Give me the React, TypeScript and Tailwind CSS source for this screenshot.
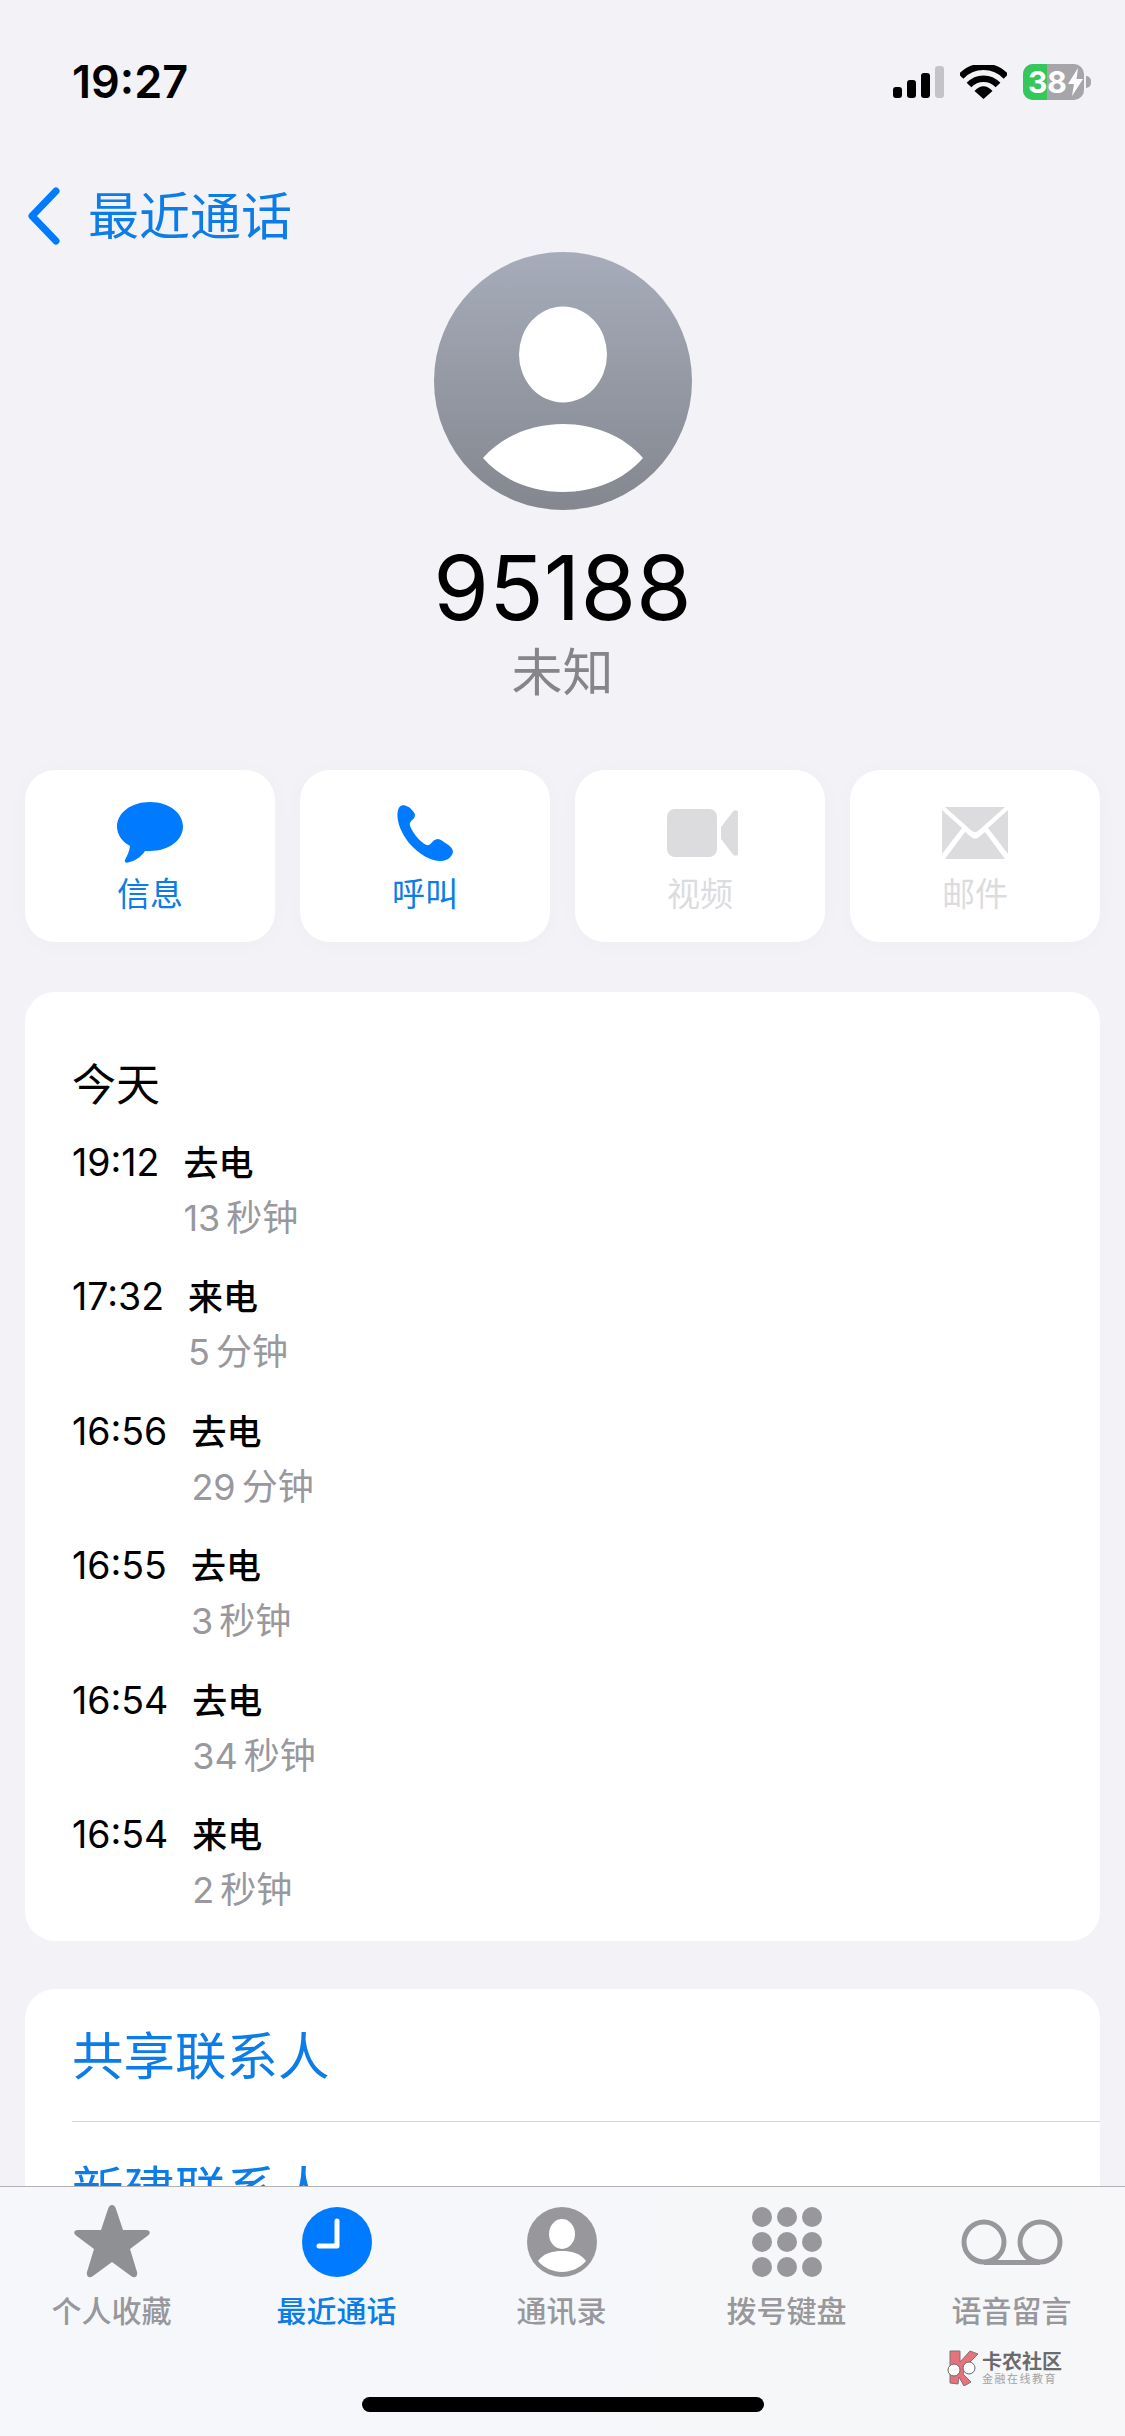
import React from 'react';

const FONT = "font-['Inter','Noto_Sans_CJK_SC',sans-serif]";

const calls = [
  { time: '19:12', kind: '去电', length: '13', unit: '秒钟' },
  { time: '17:32', kind: '来电', length: '5', unit: '分钟' },
  { time: '16:56', kind: '去电', length: '29', unit: '分钟' },
  { time: '16:55', kind: '去电', length: '3', unit: '秒钟' },
  { time: '16:54', kind: '去电', length: '34', unit: '秒钟' },
  { time: '16:54', kind: '来电', length: '2', unit: '秒钟' },
];

function StatusIcons() {
  return (
    <div className="flex items-center">
      <svg width="52" height="34" viewBox="0 0 52 34">
        <rect x="0" y="22" width="9" height="11" rx="3" fill="#000" />
        <rect x="14" y="15" width="9" height="18" rx="3" fill="#000" />
        <rect x="28" y="8" width="9" height="25" rx="3" fill="#000" />
        <rect x="42" y="1" width="9" height="32" rx="3" fill="#c3c3c8" />
      </svg>
      <svg className="ml-[15px]" width="47" height="34" viewBox="0 0 47 34">
        <path d="M1 11.5C13 -1.5 34 -1.5 46 11.5" fill="none" stroke="#000" strokeWidth="6.5" />
        <path d="M9 20C17 11.5 30 11.5 38 20" fill="none" stroke="#000" strokeWidth="6.5" />
        <path d="M14.5 26C20 19.5 27 19.5 32.5 26L23.5 34Z" fill="#000" />
      </svg>
      <div className="ml-[16px] flex items-center">
        <div className="relative h-[36px] w-[61px] overflow-hidden rounded-[10px] bg-[#a6a6aa]">
          <div className="absolute inset-y-0 left-0 w-[24px] bg-[#34c759]" />
          <div className="absolute inset-0 flex items-center pl-[5px] text-[30px] leading-none font-bold text-white">
            38
            <svg className="ml-[1px]" width="15" height="28" viewBox="0 0 15 28">
              <path d="M10 0 0 16h6l-2 12L15 11H8.500Z" fill="#fff" />
            </svg>
          </div>
        </div>
        <div className="ml-[2px] h-[12px] w-[5px] rounded-r-full bg-[#a6a6aa]" />
      </div>
    </div>
  );
}

function Avatar() {
  return (
    <div className="relative h-[258px] w-[258px] overflow-hidden rounded-full bg-gradient-to-b from-[#a6acba] to-[#84878f]">
      <svg width="258" height="258" viewBox="0 0 258 258">
        <ellipse cx="129" cy="102.500" rx="44" ry="48" fill="#fff" />
        <path d="M49 206C68 184 98 172 129 172C160 172 190 184 209 206C190 228 160 240 129 240C98 240 68 228 49 206Z" fill="#fff" />
      </svg>
    </div>
  );
}

function ActionButton({ label, disabled, children }: { label: string; disabled?: boolean; children: React.ReactNode }) {
  return (
    <div className="flex h-[172px] w-[250px] flex-col items-center rounded-[30px] bg-white shadow-[0_2px_24px_rgba(0,0,0,0.025)]">
      <div className="flex h-[102px] items-center justify-center pt-[24px]">{children}</div>
      <span className={`text-[33px] leading-[44px] ${disabled ? 'text-[#dcdcdf]' : 'text-[#0b7ce8]'}`}>{label}</span>
    </div>
  );
}

function TabItem({ label, active, children }: { label: string; active?: boolean; children: React.ReactNode }) {
  return (
    <div className="flex w-[225px] flex-col items-center">
      <div className="flex h-[76px] items-center justify-center">{children}</div>
      <span className={`mt-[11px] text-[30px] leading-[40px] font-medium ${active ? 'text-[#0b7ce8]' : 'text-[#98989c]'}`}>{label}</span>
    </div>
  );
}

export default function App() {
  return (
    <div className={`relative h-[2436px] w-[1125px] overflow-hidden bg-[#f2f2f7] text-black ${FONT}`}>
      {/* status bar */}
      <div className="flex h-[184px] items-start justify-between pt-[58px] pr-[34px] pl-[72px]">
        <span className="text-[45px] leading-[48px] font-semibold">19:27</span>
        <div className="pt-[6px]">
          <StatusIcons />
        </div>
      </div>

      {/* nav */}
      <div className="flex h-[64px] items-center pl-[27px]">
        <svg width="34" height="58" viewBox="0 0 34 58">
          <path d="M29 4 5 29l24 25" fill="none" stroke="#007aff" strokeWidth="7" strokeLinecap="round" strokeLinejoin="round" />
        </svg>
        <span className="mt-[2px] ml-[27px] text-[51px] leading-[64px] text-[#0b7ce8]">最近通话</span>
      </div>

      <div className="mt-[4px] flex flex-col items-center">
        <Avatar />
        <div className="mt-[28px] text-[90px] leading-[100px]">95188</div>
        <div className="mt-[5px] mb-[-1px] text-[51px] leading-[60px] text-[#85858a]">未知</div>
      </div>

      {/* actions */}
      <div className="mt-[68px] flex justify-between px-[25px]">
        <ActionButton label="信息">
          <svg width="68" height="62" viewBox="0 0 68 62">
            <path d="M34 0C15 0 1 11 1 24.500C1 33 6.500 40 14 44C13.500 49 11 54 9 58C8 60 10 61 12 60.500C19 59 25 55 29 49C31 49 32.500 49 34 49C53 49 67 38 67 24.500C67 11 53 0 34 0Z" fill="#007aff" />
          </svg>
        </ActionButton>
        <ActionButton label="呼叫">
          <svg width="56" height="56" viewBox="0 0 56 56">
            <path d="M8 0.500C5 -0.500 2 1 1 5C-1 13 2 25 12 38C22 49 33 56 44 56C50 56 55 52 56 47C56 44 54 42 50 39C47 37 43 34 41 34C37 34 35 38 32 40C29 41 24 37 19 31C15 25 12 21 13 18C14 15 18 14 18 10C18 8 15 5 13 3C11 1.500 10 1 8 0.500Z" fill="#007aff" />
          </svg>
        </ActionButton>
        <ActionButton label="视频" disabled>
          <svg className="ml-[5px]" width="72" height="48" viewBox="0 0 72 48">
            <rect x="0" y="0" width="50" height="48" rx="8" fill="#dcdcde" />
            <path d="M54 18 66 2.500C68 0.500 71 1 71 4V44C71 47 68 47.500 66 45.500L54 30Z" fill="#dcdcde" />
          </svg>
        </ActionButton>
        <ActionButton label="邮件" disabled>
          <svg width="66" height="52" viewBox="0 0 66 52">
            <path d="M3 0H63L36 24C34.500 25.500 31.500 25.500 30 24Z" fill="#dcdcde" />
            <path d="M0 3V47L20 21Z" fill="#dcdcde" />
            <path d="M66 3V47L46 21Z" fill="#dcdcde" />
            <path d="M3 52H63L43 25L37 30C34.500 32 31.500 32 29 30L23 25Z" fill="#dcdcde" />
          </svg>
        </ActionButton>
      </div>

      {/* call history */}
      <div className="mx-[25px] mt-[50px] rounded-[30px] bg-white pt-[63px] pb-[23px] pl-[47px]">
        <div className="mb-[21px] text-[44px] leading-[60px]">今天</div>
        <div className="flex flex-col gap-[24.400px]">
          {calls.map((call, i) => (
            <div key={i} className="flex items-baseline gap-[24px]">
              <span className="text-[37.500px] leading-[50px]">{call.time}</span>
              <div className="flex flex-col">
                <span className="text-[35px] leading-[55px] font-medium">{call.kind}</span>
                <span className="text-[36px] leading-[55px] text-[#98989d]">
                  {call.length}
                  <span className="ml-[6px]">{call.unit}</span>
                </span>
              </div>
            </div>
          ))}
        </div>
      </div>

      {/* contact actions */}
      <div className="mx-[25px] mt-[48px] rounded-[30px] bg-white pl-[47px]">
        <div className="flex h-[133px] items-center border-b border-[#d4d4d6] pt-[4px] text-[51.500px] text-[#0b7ce8]">共享联系人</div>
        <div className="flex h-[138px] items-center text-[51.500px] text-[#0b7ce8]">新建联系人</div>
      </div>

      {/* tab bar */}
      <div className="absolute inset-x-0 bottom-0 h-[250px] border-t border-[#b3b3b5] bg-gradient-to-r from-[#f5f7fb] to-[#f7f7f9]">
        <div className="-ml-px flex pt-[17px]">
          <TabItem label="个人收藏">
            <svg width="76" height="74" viewBox="0 0 76 74">
              <path d="M38 0C40 0 41 1.500 42 4L49 25H72C76 25 77 28 74 30.500L56 44L63 67C64 71 61 74 57 71L38 57L19 71C15 74 12 71 13 67L20 44L2 30.500C-1 28 0 25 4 25H27L34 4C35 1.500 36 0 38 0Z" fill="#8f9094" />
            </svg>
          </TabItem>
          <TabItem label="最近通话" active>
            <svg width="70" height="70" viewBox="0 0 70 70">
              <circle cx="35" cy="35" r="35" fill="#007aff" />
              <path d="M35 14V39H17" fill="none" stroke="#fff" strokeWidth="5" strokeLinecap="round" strokeLinejoin="round" />
            </svg>
          </TabItem>
          <TabItem label="通讯录">
            <svg width="70" height="70" viewBox="0 0 70 70">
              <circle cx="35" cy="35" r="35" fill="#98989c" />
              <ellipse cx="35" cy="27" rx="13" ry="15" fill="#fff" />
              <path d="M11 54C17 46 26 44 35 44C44 44 53 46 59 54C53 61 44 65 35 65C26 65 17 61 11 54Z" fill="#fff" />
            </svg>
          </TabItem>
          <TabItem label="拨号键盘">
            <svg width="70" height="70" viewBox="0 0 70 70">
              {[10, 35, 60].map((cy) =>
                [10, 35, 60].map((cx) => <circle key={`${cx}-${cy}`} cx={cx} cy={cy} r="10" fill="#98989c" />)
              )}
            </svg>
          </TabItem>
          <TabItem label="语音留言">
            <svg width="102" height="46" viewBox="0 0 102 46">
              <circle cx="23" cy="23" r="20" fill="none" stroke="#98989c" strokeWidth="5" />
              <circle cx="79" cy="23" r="20" fill="none" stroke="#98989c" strokeWidth="5" />
              <path d="M23 43.500H79" stroke="#98989c" strokeWidth="5" />
            </svg>
          </TabItem>
        </div>

        {/* watermark */}
        <div className="absolute top-[163px] left-[945px] flex items-center">
          <svg width="34" height="36" viewBox="0 0 34 36">
            <path d="M5 1H15V12L25 1L33 4L23 14L18 24L26 32L19 36L14 27L13 34L5 33Z" fill="#e8727b" stroke="#777" strokeWidth="1" />
            <circle cx="9" cy="20" r="6" fill="#fff" stroke="#666" strokeWidth="1" />
            <circle cx="24" cy="18" r="6" fill="#fff" stroke="#666" strokeWidth="1" />
          </svg>
          <div className="ml-[3px] flex flex-col items-start">
            <span className="text-[20px] leading-[22px] font-bold text-[#6b6b6e]">卡农社区</span>
            <span className="text-[11px] leading-[12px] tracking-[1.500px] text-[#a2a2a4]">金融在线教育</span>
          </div>
        </div>

        {/* home indicator */}
        <div className="absolute top-[210px] left-[362px] h-[15px] w-[402px] rounded-full bg-black" />
      </div>
    </div>
  );
}
